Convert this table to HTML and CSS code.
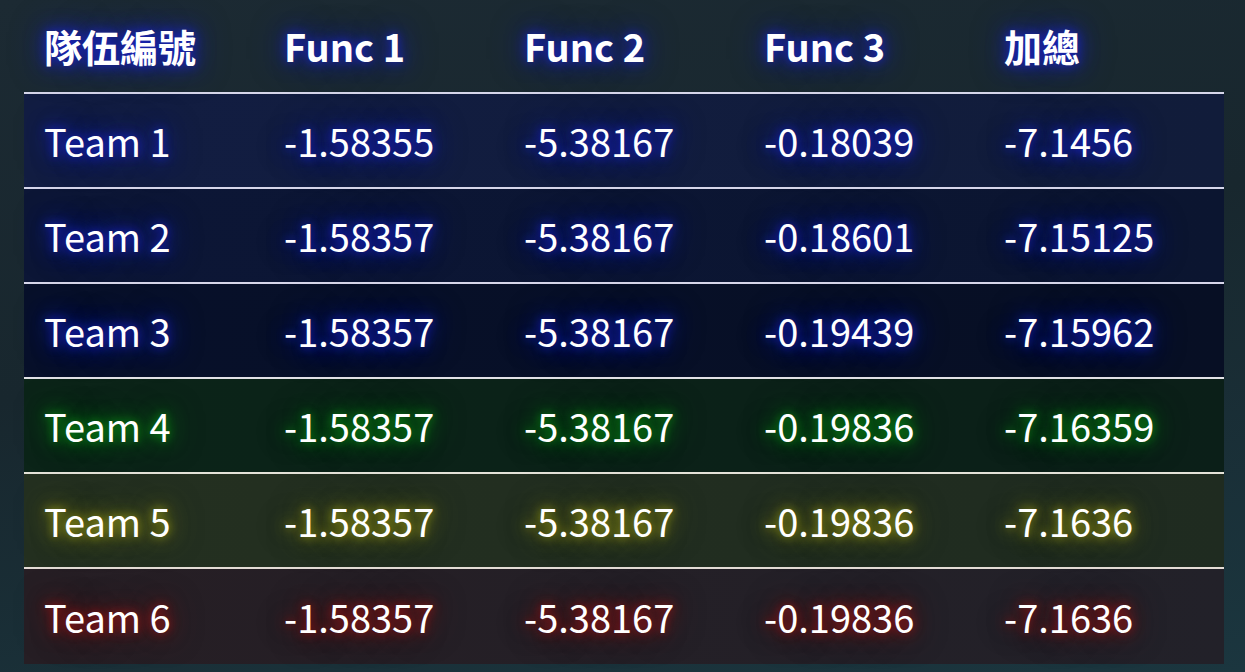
FILE: index.html
```html
<!DOCTYPE html>
<html lang="zh-Hant">
<head>
<meta charset="utf-8">
<title>Scores</title>
<link rel="stylesheet" href="styles.css">
</head>
<body>
<div class="page">
  <table class="scores">
    <thead>
      <tr class="head-row">
        <th>隊伍編號</th><th>Func 1</th><th>Func 2</th><th>Func 3</th><th>加總</th>
      </tr>
    </thead>
    <tbody>
      <tr class="row blue r1"><td>Team 1</td><td>-1.58355</td><td>-5.38167</td><td>-0.18039</td><td>-7.1456</td></tr>
      <tr class="row blue r2"><td>Team 2</td><td>-1.58357</td><td>-5.38167</td><td>-0.18601</td><td>-7.15125</td></tr>
      <tr class="row blue r3"><td>Team 3</td><td>-1.58357</td><td>-5.38167</td><td>-0.19439</td><td>-7.15962</td></tr>
      <tr class="row green"><td>Team 4</td><td>-1.58357</td><td>-5.38167</td><td>-0.19836</td><td>-7.16359</td></tr>
      <tr class="row yellow"><td>Team 5</td><td>-1.58357</td><td>-5.38167</td><td>-0.19836</td><td>-7.1636</td></tr>
      <tr class="row red last"><td>Team 6</td><td>-1.58357</td><td>-5.38167</td><td>-0.19836</td><td>-7.1636</td></tr>
    </tbody>
  </table>
</div>
</body>
</html>
```
FILE: styles.css
```css
html, body {
  margin: 0;
  padding: 0;
  height: 100%;
}
body {
  background: linear-gradient(170deg, #1c2a33 0%, #18272e 45%, #1b363f 100%);
  font-family: "Noto Sans CJK TC", "Noto Sans", sans-serif;
  color: #ffffff;
  overflow: hidden;
}
.page {
  padding: 0 21px 0 24px;
}
.scores {
  width: 1200px;
  border-collapse: collapse;
  table-layout: fixed;
}
.scores th,
.scores td {
  text-align: left;
  padding: 0 0 0 20px;
  font-size: 38px;
  line-height: 1;
  white-space: nowrap;
}
.head-row th {
  height: 92px;
  font-weight: 700;
  vertical-align: middle;
  text-shadow: 0 0 10px rgba(25, 35, 190, 0.9), 0 0 20px rgba(25, 35, 190, 0.9), 0 0 34px rgba(20, 30, 170, 0.7);
}
.row td {
  height: 92px;
  border-top: 2px solid #d6d6ea;
  font-weight: 400;
  padding-top: 1px;
  vertical-align: middle;
}
.row.last td {
  height: 94px;
}
.blue td {
  text-shadow: 0 0 10px rgba(25, 35, 210, 0.9), 0 0 20px rgba(25, 35, 200, 0.9), 0 0 34px rgba(20, 30, 180, 0.7);
}
.r1 { background: linear-gradient(90deg, #121d42, #111c3a); }
.r2 { background: linear-gradient(90deg, #0c1636, #0b1530); }
.r3 { background: linear-gradient(90deg, #07102a, #070f24); }
.green { background: linear-gradient(90deg, #0b2418, #0b1f18); }
.green td {
  border-top-color: #e2e2e6;
  text-shadow: 0 0 10px rgba(10, 150, 20, 0.95), 0 0 20px rgba(10, 140, 20, 0.9), 0 0 34px rgba(10, 120, 20, 0.6);
}
.yellow { background: linear-gradient(90deg, #243020, #1f2b20); }
.yellow td {
  border-top-color: #e4e2d8;
  text-shadow: 0 0 10px rgba(170, 170, 20, 0.9), 0 0 20px rgba(150, 150, 20, 0.75), 0 0 34px rgba(130, 130, 20, 0.5);
}
.red { background: linear-gradient(90deg, #261e24, #222129); }
.red td {
  border-top-color: #e4dcd6;
  text-shadow: 0 0 10px rgba(160, 20, 20, 0.95), 0 0 20px rgba(140, 20, 20, 0.9), 0 0 34px rgba(120, 20, 20, 0.6);
}
```
